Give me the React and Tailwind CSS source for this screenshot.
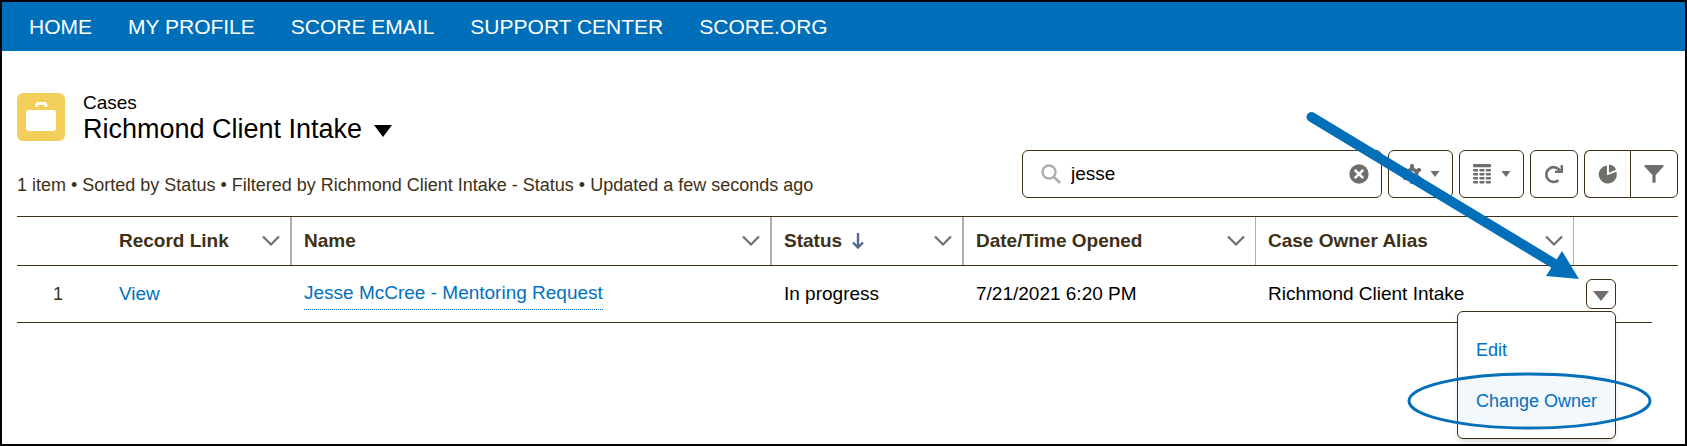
import { useState } from 'react'

const navLinks = ['HOME', 'MY PROFILE', 'SCORE EMAIL', 'SUPPORT CENTER', 'SCORE.ORG']

const columns = [
  { label: 'Record Link', divider: 'border-r-2' },
  { label: 'Name', divider: 'border-r-2' },
  { label: 'Status', divider: 'border-r-2', sorted: true },
  { label: 'Date/Time Opened', divider: 'border-r' },
  { label: 'Case Owner Alias', divider: 'border-r' },
]

const toolButton = 'flex h-12 items-center justify-center border border-[#3e3017] bg-white text-[#706e6b]'

function CaseIcon() {
  return (
    <svg className="size-12 shrink-0 rounded-md bg-[#f2cf5b]" viewBox="0 0 48 48" aria-hidden="true">
      <path d="M19.500 14v-1.500a2 2 0 0 1 2-2h5.500a2 2 0 0 1 2 2V14" fill="none" stroke="#fff" strokeWidth="3" />
      <rect x="9" y="17" width="30" height="21" rx="3" fill="#fff" />
    </svg>
  )
}

function SmallCaret() {
  return (
    <svg className="h-1.5 w-2.5" viewBox="0 0 10 6" aria-hidden="true">
      <path d="M.5 0h9L5 6z" fill="currentColor" />
    </svg>
  )
}

function GearIcon() {
  return (
    <svg className="size-5" viewBox="0 0 20 20" aria-hidden="true">
      <g fill="currentColor">
        <rect x="8" y="0" width="4" height="20" rx="1.500" />
        <rect x="8" y="0" width="4" height="20" rx="1.500" transform="rotate(60 10 10)" />
        <rect x="8" y="0" width="4" height="20" rx="1.500" transform="rotate(120 10 10)" />
        <circle cx="10" cy="10" r="6.500" />
      </g>
      <circle cx="10" cy="10" r="2.800" fill="#fff" />
    </svg>
  )
}

function TableIcon() {
  return (
    <svg className="h-5 w-[18px]" viewBox="0 0 18 20" aria-hidden="true">
      <g fill="currentColor">
        <rect x="0" y="0" width="18" height="3.200" rx="1" />
        {[5, 9, 13, 17].map(y => (
          [0, 6.4, 12.8].map(x => <rect key={`${x}-${y}`} x={x} y={y} width="5.200" height="2.500" rx="1" />)
        ))}
      </g>
    </svg>
  )
}

function RefreshIcon() {
  return (
    <svg className="size-5" viewBox="0 0 20 20" aria-hidden="true">
      <path d="M14.500 16.200A7.400 7.400 0 1 1 16.200 7" fill="none" stroke="currentColor" strokeWidth="2.600" />
      <path d="M17.800 1v6.800H11" fill="none" stroke="currentColor" strokeWidth="2.400" />
    </svg>
  )
}

function ChartIcon() {
  return (
    <svg className="size-5" viewBox="0 0 20 20" aria-hidden="true">
      <path d="M9 1.600v9.600l9.300-3.400A9 9 0 1 1 9 1.600z" fill="currentColor" />
      <path d="M11 .5a8.500 8.500 0 0 1 7 5.200l-7 3z" fill="currentColor" />
    </svg>
  )
}

function FilterIcon() {
  return (
    <svg className="size-5" viewBox="0 0 20 20" aria-hidden="true">
      <path d="M1 1h18q1 .5.500 1.500L11.600 11v7q0 .8-.8.800H9.200q-.8 0-.8-.8v-7L.5 2.500Q0 1.500 1 1z" fill="currentColor" />
    </svg>
  )
}

function HeaderChevron() {
  return (
    <svg className="h-3 w-[18px]" viewBox="0 0 18 12" aria-hidden="true">
      <path d="M1 1.500l8 8 8-8" fill="none" stroke="#706e6b" strokeWidth="2.200" />
    </svg>
  )
}

function SortArrow() {
  return (
    <svg className="h-4 w-3" viewBox="0 0 12 16" aria-hidden="true">
      <path d="M6 0v14M1 9.500l5 5 5-5" fill="none" stroke="#54698d" strokeWidth="2.400" />
    </svg>
  )
}

function PointerArrow() {
  return (
    <svg className="pointer-events-none absolute right-full bottom-5 h-[185px] w-[286px]" viewBox="0 0 286 185" aria-hidden="true">
      <path d="M11.500 13L258 162" stroke="#036fb9" strokeWidth="10" strokeLinecap="round" />
      <path d="M279 175l-17-28-16 25z" fill="#036fb9" />
    </svg>
  )
}

function RowMenu() {
  const [open, setOpen] = useState(true)
  return (
    <div className="relative ml-3 size-[30px]">
      <button
        type="button"
        aria-label="Show actions"
        aria-expanded={open}
        onClick={() => setOpen(!open)}
        className="flex size-[30px] items-center justify-center rounded-md border border-[#3e3017] bg-white text-[#706e6b]"
      >
        <svg className="mt-1 h-2.5 w-4" viewBox="0 0 16 10" aria-hidden="true">
          <path d="M0 0h16L8 10z" fill="currentColor" />
        </svg>
      </button>
      <PointerArrow />
      {open && (
        <div className="absolute top-8 right-0 w-[159px] rounded-md border border-[#3e3017] bg-white py-3 text-lg shadow-md">
          <a href="#edit" className="flex h-[51px] items-center px-[18px] text-[#0070c0]">Edit</a>
          <a href="#owner" className="flex h-[51px] items-center bg-[#f3f8fc] px-[18px] whitespace-nowrap text-[#0070c0]">Change Owner</a>
          <svg className="pointer-events-none absolute -right-[37px] bottom-2 h-[58px] w-[245px]" viewBox="0 0 245 58" aria-hidden="true">
            <ellipse cx="122.500" cy="29" rx="120.500" ry="27" fill="none" stroke="#036fb9" strokeWidth="3" />
          </svg>
        </div>
      )}
    </div>
  )
}

export default function App() {
  const [search, setSearch] = useState('jesse')
  return (
    <div className="min-h-screen border-2 border-black bg-white font-['Liberation_Sans',Arial,sans-serif] text-black">
      <nav className="flex h-[49px] items-center gap-9 bg-[#006fb9] px-[27px] text-[21px] text-white">
        {navLinks.map(link => <a key={link} href="#nav">{link}</a>)}
      </nav>

      <main className="pt-[42px] pr-[7px] pl-[15px]">
        <header className="flex items-end justify-between">
          <div>
            <div className="flex gap-[18px]">
              <CaseIcon />
              <div>
                <p className="text-[19px] leading-5">Cases</p>
                <button type="button" className="flex items-center gap-3 text-[27px] leading-8">
                  <h1>Richmond Client Intake</h1>
                  <svg className="mt-1 h-3 w-[18px]" viewBox="0 0 18 12" aria-hidden="true">
                    <path d="M0 0h18L9 12z" fill="currentColor" />
                  </svg>
                </button>
              </div>
            </div>
            <p className="mt-7 text-lg leading-[25px] text-[#3e3017]">
              1 item • Sorted by Status • Filtered by Richmond Client Intake - Status • Updated a few seconds ago
            </p>
          </div>

          <div className="flex gap-1.5">
            <div className="flex h-12 w-[360px] items-center rounded-md border border-[#3e3017] px-3">
              <svg className="ml-1.5 size-5 shrink-0" viewBox="0 0 20 20" aria-hidden="true">
                <circle cx="8" cy="8" r="6.500" fill="none" stroke="#b0adab" strokeWidth="2.400" />
                <path d="M12.500 12.500L19 19" stroke="#b0adab" strokeWidth="2.600" />
              </svg>
              <input
                type="text"
                aria-label="Search this list"
                value={search}
                onChange={e => setSearch(e.target.value)}
                className="min-w-0 flex-1 px-2.5 text-[19px] outline-none"
              />
              <button type="button" aria-label="Clear search" onClick={() => setSearch('')}>
                <svg className="size-5" viewBox="0 0 20 20" aria-hidden="true">
                  <circle cx="10" cy="10" r="9.700" fill="#706e6b" />
                  <path d="M5.800 5.800l8.400 8.400M14.200 5.800l-8.400 8.400" stroke="#fff" strokeWidth="2.600" />
                </svg>
              </button>
            </div>
            <button type="button" aria-label="List view controls" className={`${toolButton} w-[65px] gap-2 rounded-md`}>
              <GearIcon />
              <SmallCaret />
            </button>
            <button type="button" aria-label="Display as table" className={`${toolButton} w-[65px] gap-2.5 rounded-md`}>
              <TableIcon />
              <SmallCaret />
            </button>
            <button type="button" aria-label="Refresh" className={`${toolButton} w-12 rounded-md`}>
              <RefreshIcon />
            </button>
            <div className="flex">
              <button type="button" aria-label="Show charts" className={`${toolButton} w-[46px] rounded-l-md border-r-0`}>
                <ChartIcon />
              </button>
              <button type="button" aria-label="Show filters" className={`${toolButton} w-12 rounded-r-md`}>
                <FilterIcon />
              </button>
            </div>
          </div>
        </header>

        <table className="mt-[18px] w-full table-fixed border-separate border-spacing-0 text-left text-[19px]">
          <colgroup>
            <col className="w-[90px]" />
            <col className="w-[185px]" />
            <col />
            <col className="w-48" />
            <col className="w-[292px]" />
            <col className="w-[318px]" />
            <col className="w-[78px]" />
            <col className="w-[26px]" />
          </colgroup>
          <thead className="text-[#3e3017]">
            <tr className="h-[50px]">
              <th className="border-y border-[#3e3017]" aria-label="Row number" />
              {columns.map(col => (
                <th key={col.label} className="border-y border-[#3e3017] p-0">
                  <div className={`flex h-12 items-center justify-between border-[#b0adab] pr-2.5 pl-3 ${col.divider}`}>
                    <span className="flex items-center gap-2.5">
                      {col.label}
                      {col.sorted && <SortArrow />}
                    </span>
                    <HeaderChevron />
                  </div>
                </th>
              ))}
              <th colSpan={2} className="border-y border-[#3e3017]" aria-label="Actions" />
            </tr>
          </thead>
          <tbody>
            <tr className="h-[57px]">
              <td className="border-b border-[#3e3017] p-0 pr-11 text-right text-lg text-[#3e3017]">1</td>
              <td className="border-b border-[#3e3017] p-0 pl-3">
                <a href="#view" className="text-[#0070c0]">View</a>
              </td>
              <td className="border-b border-[#3e3017] p-0 pl-3">
                <a href="#case" className="inline-block border-b border-dotted border-[#0070c0] pb-1 leading-6 text-[#0070c0]">
                  Jesse McCree - Mentoring Request
                </a>
              </td>
              <td className="border-b border-[#3e3017] p-0 pl-3">In progress</td>
              <td className="border-b border-[#3e3017] p-0 pl-3">7/21/2021 6:20 PM</td>
              <td className="border-b border-[#3e3017] p-0 pl-3">Richmond Client Intake</td>
              <td className="border-b border-[#3e3017] p-0">
                <RowMenu />
              </td>
              <td className="p-0" />
            </tr>
          </tbody>
        </table>
      </main>
    </div>
  )
}
